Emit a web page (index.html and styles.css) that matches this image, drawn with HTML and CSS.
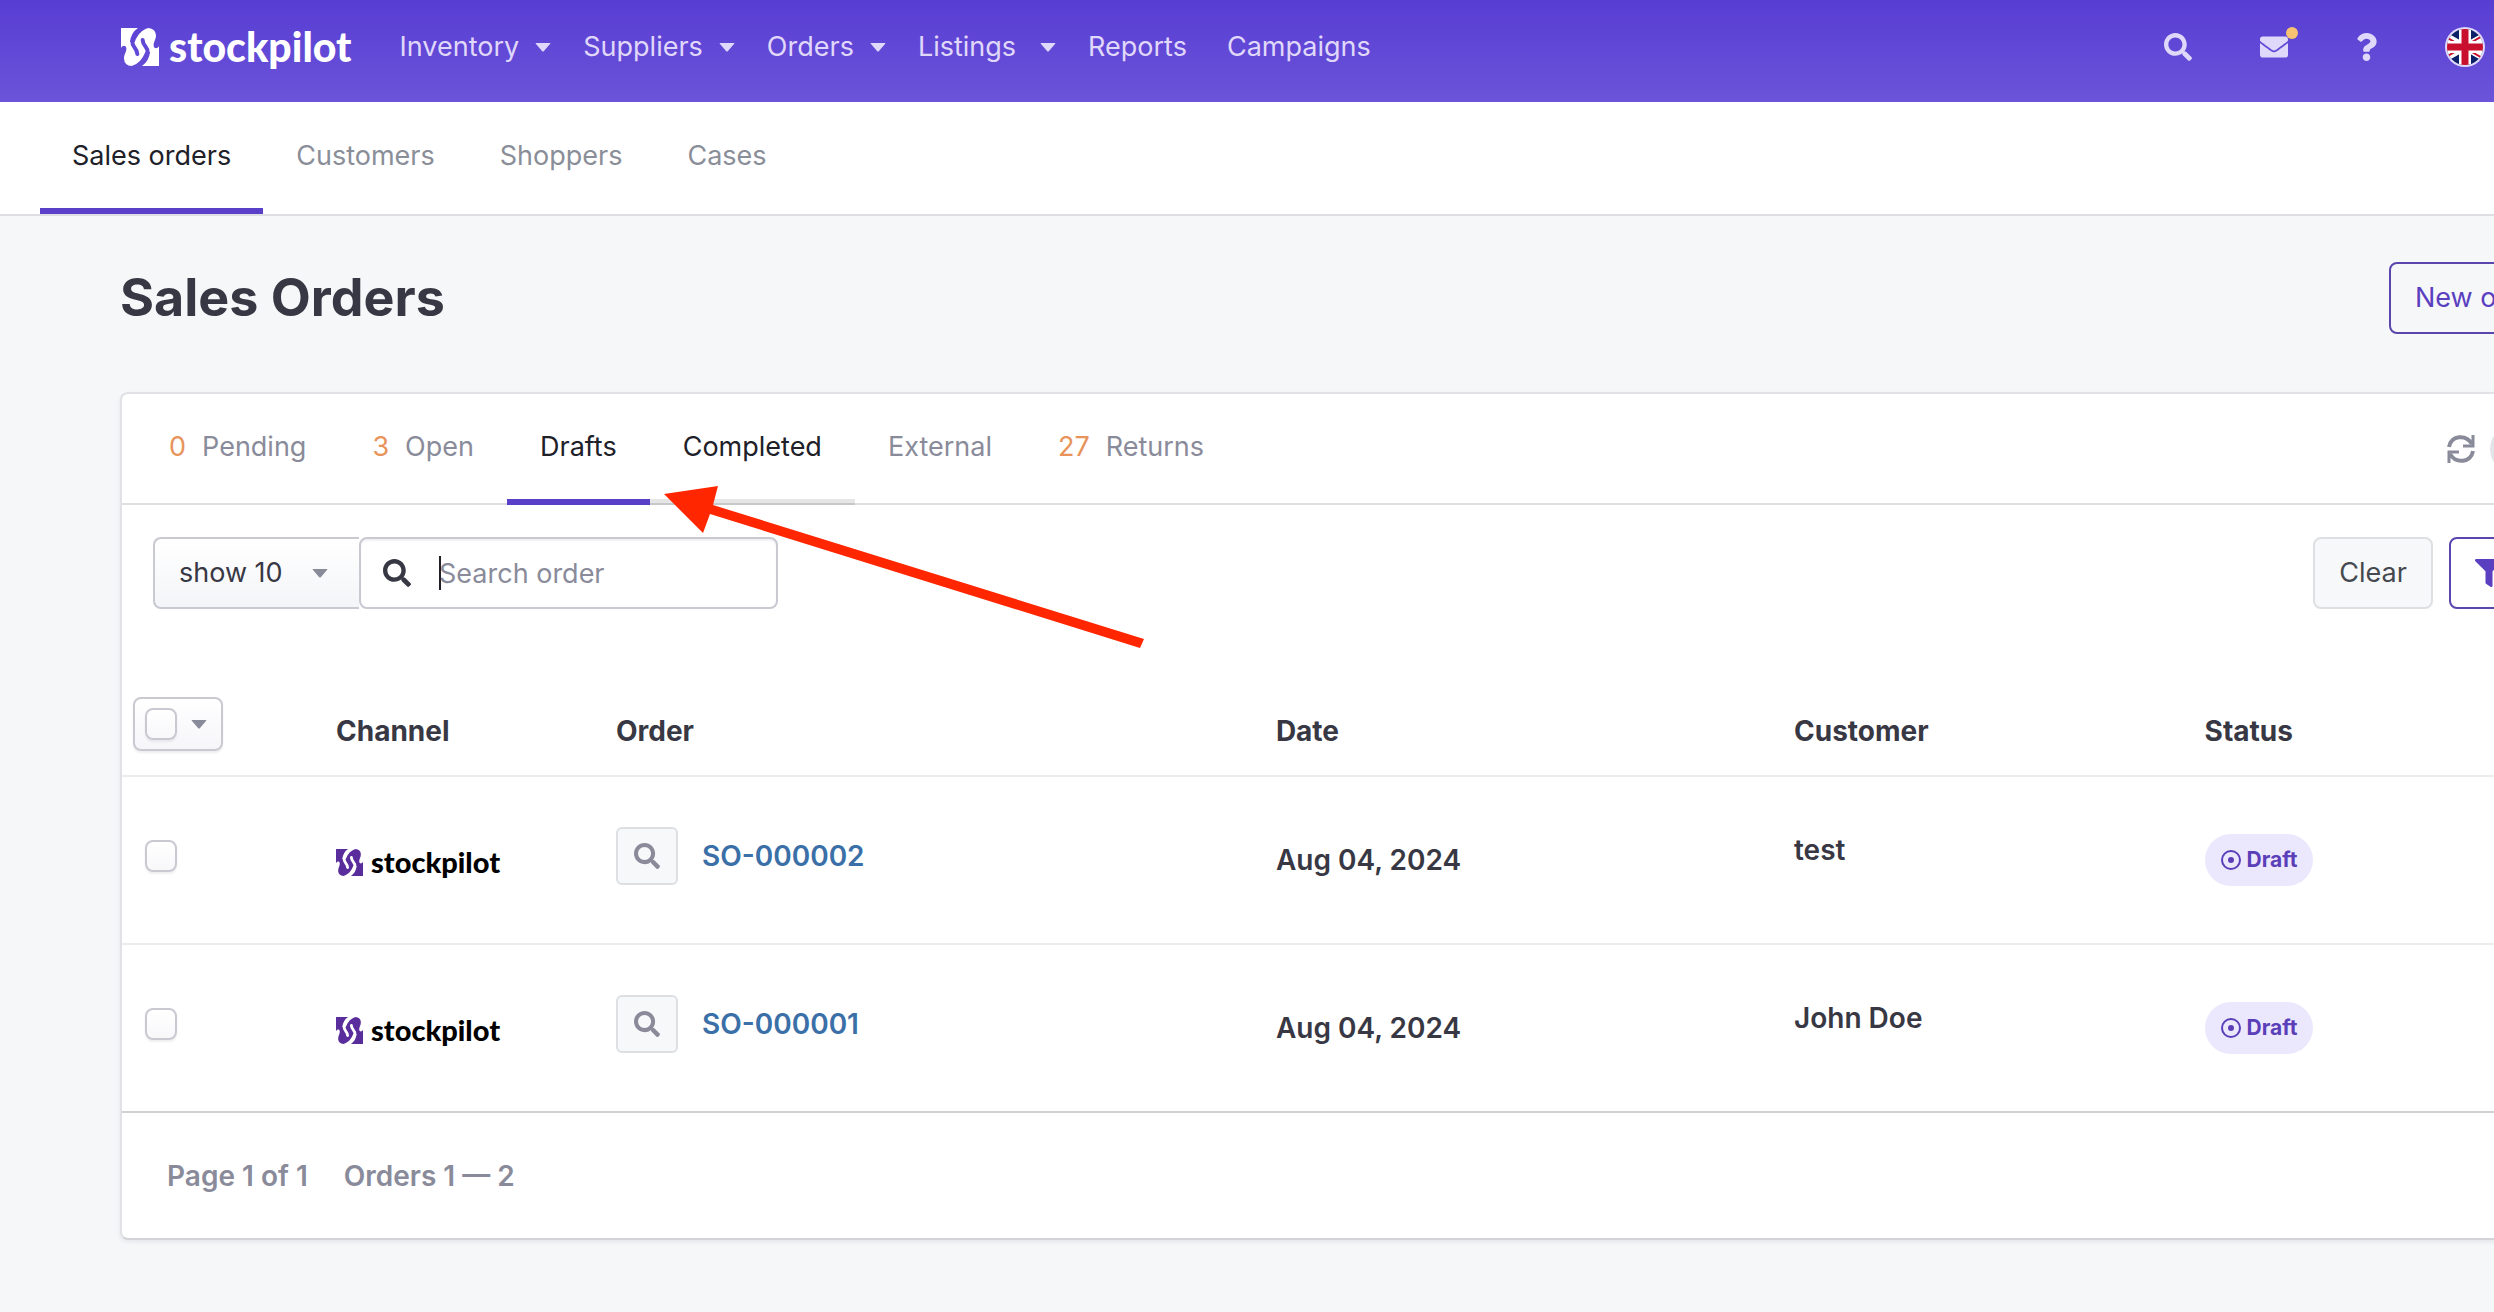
FILE: index.html
```html
<!DOCTYPE html>
<html lang="en">
<head>
    <meta charset="UTF-8">
    <meta name="viewport" content="width=device-width, initial-scale=1.0">
    <title>Sales Orders - stockpilot</title>
    <link rel="stylesheet" href="styles.css">
</head>
<body>
    <!-- shared icons -->
    <svg class="sprite" aria-hidden="true">
        <mask id="mark-cut" maskUnits="userSpaceOnUse" x="0" y="0" width="114" height="114">
            <rect width="114" height="114" fill="#fff"/>
            <g id="mark-strand">
                <path d="M51 0H82C62 6 50 20 41 42L27 42Q30 14 51 0Z" fill="#000"/>
                <path d="M34 40C33 60 48 58 49 78" fill="none" stroke="#000" stroke-width="12" stroke-linecap="round"/>
            </g>
            <use href="#mark-strand" transform="rotate(180 57 57)"/>
        </mask>
        <symbol id="mark" viewBox="0 0 114 114">
            <path mask="url(#mark-cut)" fill="currentColor" d="M0 0H82Q104 2 105 22C105 36 97 42 98 54C100 64 110 62 114 54V114H32Q10 112 9 92C9 78 17 72 16 60C14 50 4 52 0 60Z"/>
        </symbol>
        <symbol id="search" viewBox="0 0 512 512">
            <path fill="currentColor" d="M505 442.7L405.3 343c-4.5-4.5-10.6-7-17-7H372c27.6-35.3 44-79.7 44-128C416 93.1 322.9 0 208 0S0 93.1 0 208s93.1 208 208 208c48.3 0 92.7-16.4 128-44v16.3c0 6.4 2.5 12.5 7 17l99.7 99.7c9.4 9.4 24.6 9.4 33.9 0l28.3-28.3c9.4-9.4 9.4-24.6.1-34zM208 336c-70.7 0-128-57.2-128-128 0-70.7 57.2-128 128-128 70.7 0 128 57.2 128 128 0 70.7-57.2 128-128 128z"/>
        </symbol>
        <symbol id="caret" viewBox="0 0 16 9">
            <path fill="currentColor" d="M1 0H15Q16 0 15 1L9 8Q8 9 7 8L1 1Q0 0 1 0Z"/>
        </symbol>
        <symbol id="dot-circle" viewBox="0 0 20 20">
            <circle cx="10" cy="10" r="9" fill="none" stroke="currentColor" stroke-width="2"/>
            <circle cx="10" cy="10" r="3" fill="currentColor"/>
        </symbol>
    </svg>

    <header class="topbar">
        <a class="brand" href="#"><svg class="brand-mark"><use href="#mark"/></svg>stockpilot</a>
        <nav class="main-nav">
            <a href="#">Inventory <svg class="caret"><use href="#caret"/></svg></a>
            <a href="#">Suppliers <svg class="caret"><use href="#caret"/></svg></a>
            <a href="#">Orders <svg class="caret"><use href="#caret"/></svg></a>
            <a class="wide" href="#">Listings <svg class="caret"><use href="#caret"/></svg></a>
            <a class="plain" href="#">Reports</a>
            <a class="plain" href="#">Campaigns</a>
        </nav>
        <div class="tools">
            <button type="button" aria-label="Search"><svg class="icon"><use href="#search"/></svg></button>
            <button type="button" class="mail" aria-label="Messages">
                <svg class="icon" viewBox="0 0 512 512"><path fill="currentColor" d="M502.3 190.8c3.9-3.1 9.7-.2 9.7 4.7V400c0 26.5-21.5 48-48 48H48c-26.5 0-48-21.5-48-48V195.6c0-5 5.7-7.8 9.7-4.7 22.4 17.4 52.1 39.5 154.1 113.6 21.1 15.4 56.7 47.8 92.2 47.6 35.7.3 72-32.8 92.3-47.6 102-74.1 131.6-96.3 154-113.7zM256 320c23.2.4 56.6-29.2 73.4-41.4 132.7-96.3 142.8-104.7 173.4-128.7 5.8-4.5 9.2-11.5 9.2-18.9v-19c0-26.5-21.5-48-48-48H48c-26.5 0-48 21.5-48 48v19c0 7.4 3.4 14.3 9.2 18.9 30.6 23.9 40.7 32.4 173.4 128.7 16.8 12.2 50.2 41.8 73.4 41.4z"/></svg>
                <span class="mail-dot"></span>
            </button>
            <button type="button" class="help" aria-label="Help">
                <svg class="icon" viewBox="0 0 384 512"><path fill="currentColor" d="M202.021 0C122.202 0 70.503 32.703 29.914 91.026c-7.363 10.58-5.093 25.086 5.178 32.874l43.138 32.709c10.373 7.865 25.132 6.026 33.253-4.148 25.049-31.381 43.63-49.449 82.757-49.449 30.764 0 68.816 19.799 68.816 49.631 0 22.552-18.617 34.134-48.993 51.164-35.423 19.86-82.299 44.576-82.299 106.405V320c0 13.255 10.745 24 24 24h72.471c13.255 0 24-10.745 24-24v-5.773c0-42.86 125.268-44.645 125.268-160.627C377.504 66.256 286.902 0 202.021 0zM192 373.459c-38.196 0-69.271 31.075-69.271 69.271 0 38.195 31.075 69.27 69.271 69.27s69.271-31.075 69.271-69.271-31.075-69.27-69.271-69.27z"/></svg>
            </button>
            <button type="button" class="flag" aria-label="Language">
                <svg viewBox="0 0 40 40">
                    <clipPath id="flag-clip"><circle cx="20" cy="20" r="18"/></clipPath>
                    <circle cx="20" cy="20" r="20" fill="#e0d8fa"/>
                    <g clip-path="url(#flag-clip)">
                        <path fill="#0a2167" d="M0 0H40V40H0Z"/>
                        <path stroke="#fff" stroke-width="7" d="M-8 4L48 36M48 4L-8 36"/>
                        <path stroke="#c8102e" stroke-width="2" d="M-8 5L20 21M48 3L20 19M48 37L20 21M-8 35L20 19"/>
                        <path stroke="#fff" stroke-width="12" d="M20 0V40M0 20H40"/>
                        <path stroke="#c8102e" stroke-width="7" d="M20 0V40M0 20H40"/>
                    </g>
                </svg>
            </button>
        </div>
    </header>

    <nav class="subnav">
        <a class="active" href="#">Sales orders</a>
        <a href="#">Customers</a>
        <a href="#">Shoppers</a>
        <a href="#">Cases</a>
    </nav>

    <main class="page">
        <div class="page-head">
            <h1>Sales Orders</h1>
            <button type="button" class="btn btn-outline">New order</button>
        </div>

        <section class="card">
            <div class="tabs">
                <a href="#"><b>0</b>Pending</a>
                <a href="#"><b>3</b>Open</a>
                <a class="active" href="#">Drafts</a>
                <a class="hover" href="#">Completed</a>
                <a href="#">External</a>
                <a href="#"><b>27</b>Returns</a>
                <div class="tabs-right">
                    <button type="button" class="refresh" aria-label="Refresh">
                        <svg viewBox="0 0 28 28">
                            <g id="half" fill="none" stroke="currentColor" stroke-width="4">
                                <path d="M2 12C4 0 19 -1 25 9"/>
                                <path stroke-width="3" d="M26 0V11H16"/>
                            </g>
                            <use href="#half" transform="rotate(180 14 14)"/>
                        </svg>
                    </button>
                    <span class="avatar"></span>
                </div>
            </div>

            <form class="filters">
                <div class="show">
                    <select aria-label="Rows per page">
                        <option>show 10</option>
                        <option>show 25</option>
                    </select>
                    <svg class="caret"><use href="#caret"/></svg>
                </div>
                <label class="search">
                    <svg class="icon"><use href="#search"/></svg>
                    <span class="cursor"></span>
                    <input type="text" placeholder="Search order" aria-label="Search order">
                </label>
                <button type="button" class="btn btn-clear">Clear</button>
                <button type="button" class="btn btn-outline btn-filter" aria-label="Filter">
                    <svg class="icon" viewBox="0 0 512 512"><path fill="currentColor" d="M487.976 0H24.028C2.71 0-8.047 25.866 7.058 40.971L192 225.941V432c0 7.831 3.821 15.17 10.237 19.662l80 55.98C298.02 518.69 320 507.493 320 487.98V225.941l184.947-184.97C520.021 25.896 509.338 0 487.976 0z"/></svg>
                </button>
            </form>

            <table class="orders">
                <thead>
                    <tr>
                        <th class="col-check">
                            <div class="check-all">
                                <input type="checkbox" aria-label="Select all">
                                <button type="button" aria-label="Selection menu"><svg class="caret"><use href="#caret"/></svg></button>
                            </div>
                        </th>
                        <th class="col-channel">Channel</th>
                        <th class="col-order">Order</th>
                        <th class="col-date">Date</th>
                        <th class="col-customer">Customer</th>
                        <th>Status</th>
                    </tr>
                </thead>
                <tbody>
                    <tr>
                        <td class="check"><input type="checkbox" aria-label="Select SO-000002"></td>
                        <td class="channel"><span class="brand-small"><svg class="brand-mark"><use href="#mark"/></svg>stockpilot</span></td>
                        <td class="order">
                            <div class="order-link">
                                <button type="button" class="view" aria-label="View SO-000002"><svg class="icon"><use href="#search"/></svg></button>
                                <a href="#">SO-000002</a>
                            </div>
                        </td>
                        <td>Aug 04, 2024</td>
                        <td class="customer">test</td>
                        <td><span class="badge"><svg><use href="#dot-circle"/></svg>Draft</span></td>
                    </tr>
                    <tr>
                        <td class="check"><input type="checkbox" aria-label="Select SO-000001"></td>
                        <td class="channel"><span class="brand-small"><svg class="brand-mark"><use href="#mark"/></svg>stockpilot</span></td>
                        <td class="order">
                            <div class="order-link">
                                <button type="button" class="view" aria-label="View SO-000001"><svg class="icon"><use href="#search"/></svg></button>
                                <a href="#">SO-000001</a>
                            </div>
                        </td>
                        <td>Aug 04, 2024</td>
                        <td class="customer">John Doe</td>
                        <td><span class="badge"><svg><use href="#dot-circle"/></svg>Draft</span></td>
                    </tr>
                </tbody>
            </table>

            <div class="card-foot">
                <span>Page 1 of 1</span>
                <span>Orders 1 — 2</span>
            </div>
        </section>
    </main>

    <!-- arrow pointing at the Drafts tab -->
    <svg class="arrow" viewBox="0 0 480 162" aria-hidden="true">
        <path fill="#ff2600" d="M0 8L54 0L49 19L480 153L476 162L46 28L39 47Z"/>
    </svg>
</body>
</html>
```
FILE: styles.css
```css
*{
    box-sizing: border-box;
}
body{
    margin: 0;
    position: relative;
    overflow-x: hidden;
    background: #f6f7f9;
    color: #383844;
    font-family: Inter, "Liberation Sans", sans-serif;
    font-size: 27px;
    line-height: 40px;
}
a{
    color: inherit;
    text-decoration: none;
}
button, input, select{
    margin: 0;
    font: inherit;
    color: inherit;
}
button{
    padding: 0;
    border: 0;
    background: none;
}
svg{
    display: block;
    flex: none;
}
.sprite{
    position: absolute;
    width: 0;
    height: 0;
}
.icon{
    width: 28px;
    height: 28px;
}
.caret{
    width: 16px;
    height: 9px;
}

/* top bar */
.topbar{
    display: flex;
    align-items: center;
    height: 102px;
    padding: 0 9px 8px 121px;
    background: linear-gradient(#583dd3, #6b54d9);
    color: #e0d8fa;
}
.brand{
    display: flex;
    align-items: center;
    gap: 10px;
    color: #fff;
    font-family: Lato, sans-serif;
    font-size: 41px;
    font-weight: 900;
}
.brand-mark{
    width: 38px;
    height: 38px;
}
.main-nav{
    display: flex;
    gap: 32px;
    margin-left: 48px;
}
.main-nav a{
    display: flex;
    align-items: center;
    gap: 16px;
}
.main-nav .wide{
    gap: 24px;
}
.main-nav .plain{
    margin-right: 8px;
}
.tools{
    display: flex;
    align-items: center;
    gap: 68px;
    margin-left: auto;
}
.mail{
    position: relative;
}
.mail-dot{
    position: absolute;
    top: -6px;
    right: -10px;
    width: 12px;
    height: 12px;
    border-radius: 50%;
    background: #f7c272;
}
.help .icon{
    width: 21px;
}
.flag svg{
    width: 40px;
    height: 40px;
}

/* second level navigation */
.subnav{
    display: flex;
    gap: 1px;
    height: 114px;
    padding-left: 40px;
    border-bottom: 2px solid #dddfe3;
    background: #fff;
    color: #8a8e98;
}
.subnav a{
    display: flex;
    align-items: center;
    padding: 2px 32px 0;
    border-bottom: 6px solid transparent;
}
.subnav .active{
    border-color: #5a3fc8;
    color: #202029;
}

/* the card is wider than the window, the rest runs off the right side */
.page{
    margin-right: -194px;
    padding: 46px 120px 72px;
}
.page-head{
    display: flex;
    justify-content: space-between;
    align-items: center;
    margin-bottom: 58px;
}
h1{
    margin: 0;
    font-size: 52px;
    font-weight: 700;
    line-height: 64px;
}
.btn{
    height: 72px;
    padding: 0 24px;
    border: 2px solid #dddfe3;
    border-radius: 8px;
    white-space: nowrap;
}
.btn-outline{
    width: 179px;
    border-color: #5a46ac;
    color: #5a3fc0;
}
.card{
    border: 2px solid #e0e2e6;
    border-bottom-color: #d2d4d8;
    border-radius: 8px;
    background: #fff;
    box-shadow: 0 2px 4px rgba(40, 40, 60, .08);
}
.tabs{
    display: flex;
    height: 111px;
    padding-left: 14px;
    border-bottom: 2px solid #dddfe3;
    color: #8a8b9a;
}
.tabs a{
    display: flex;
    align-items: center;
    gap: 16px;
    margin-bottom: -2px;
    padding: 0 33px;
    border-bottom: 6px solid transparent;
}
.tabs b{
    color: #e8935a;
    font-weight: 400;
}
.tabs .active{
    border-color: #5a3fc8;
    color: #202029;
}
.tabs .hover{
    border-color: rgba(0, 0, 0, .1);
    color: #202029;
}
.tabs-right{
    display: flex;
    align-items: center;
    gap: 15px;
    margin-left: auto;
    padding-right: 28px;
    color: #8a8b9a;
}
.refresh svg{
    width: 28px;
    height: 28px;
}
.avatar{
    width: 48px;
    height: 48px;
    border-radius: 50%;
    background: #e3e4e9;
}

/* filters */
.filters{
    display: flex;
    padding: 32px 29px 40px 31px;
}
.show{
    position: relative;
}
.show select{
    width: 206px;
    height: 72px;
    padding: 0 24px;
    border: 2px solid #c8c9d1;
    border-right: 0;
    border-radius: 8px 0 0 8px;
    background: linear-gradient(#fff, #f4f5f8);
    appearance: none;
}
.show .caret{
    position: absolute;
    top: 32px;
    right: 31px;
    color: #8a8b9a;
}
.search{
    position: relative;
    display: flex;
    align-items: center;
    gap: 28px;
    width: 419px;
    height: 72px;
    margin-right: auto;
    padding-left: 22px;
    border: 2px solid #c8c9d1;
    border-radius: 8px;
    box-shadow: inset 0 2px 2px #f1f1f5;
}
.search input{
    flex: 1;
    min-width: 0;
    padding: 2px 0 0;
    border: 0;
    outline: 0;
    background: none;
}
.search input::placeholder{
    color: #8a8b9a;
    opacity: 1;
}
.cursor{
    position: absolute;
    left: 78px;
    width: 2px;
    height: 34px;
    background: #202029;
}
.btn-clear{
    width: 120px;
    background: #f7f8fa;
    color: #45494f;
}
.btn-filter{
    width: 88px;
    margin-left: 16px;
}

/* orders table */
.orders{
    width: 100%;
    border-collapse: separate;
    border-spacing: 0;
    table-layout: fixed;
    font-size: 28px;
    font-weight: 600;
}
.orders th, .orders td{
    padding: 0 12px;
    border-bottom: 2px solid #ebecee;
    text-align: left;
}
.orders th{
    height: 128px;
    padding-bottom: 24px;
    font-weight: 700;
    vertical-align: bottom;
}
.orders td{
    height: 168px;
}
.orders tr:last-child td{
    border-bottom-color: #d0d1d5;
}
.orders .col-check{
    width: 202px;
    padding-left: 11px;
}
.col-channel{
    width: 280px;
}
.col-order{
    width: 27%;
}
.col-date{
    width: 21.2%;
}
.col-customer{
    width: 16.8%;
}
input[type=checkbox]{
    display: block;
    width: 32px;
    height: 32px;
    border: 2px solid #c8c9d1;
    border-radius: 8px;
    background: linear-gradient(#fff, #f8f8fb);
    box-shadow: 0 2px 2px rgba(40, 40, 60, .08);
    appearance: none;
}
.check-all{
    display: flex;
    align-items: center;
    gap: 14px;
    width: 90px;
    height: 54px;
    padding-left: 10px;
    border: 2px solid #c8c9d1;
    border-radius: 8px;
    background: linear-gradient(#fff, #f6f6fa);
    box-shadow: 0 2px 2px rgba(40, 40, 60, .08);
    color: #8a8b9a;
}
.orders .check{
    padding: 0 0 8px 23px;
}
.orders .channel{
    padding-top: 4px;
}
.orders .order{
    padding-bottom: 8px;
}
.orders .customer{
    padding-bottom: 20px;
}
.brand-small{
    display: flex;
    align-items: center;
    gap: 8px;
    color: #000;
    font-family: Lato, sans-serif;
    font-size: 29px;
    font-weight: 900;
}
.brand-small .brand-mark{
    width: 27px;
    height: 27px;
    color: #5a2d9c;
}
.order-link{
    display: flex;
    align-items: center;
    gap: 24px;
    color: #3b6fa8;
}
.view{
    display: flex;
    align-items: center;
    justify-content: center;
    width: 62px;
    height: 58px;
    border: 2px solid #dddfe3;
    border-radius: 6px;
    background: #f7f8fa;
    color: #8a8b9a;
}
.view .icon{
    width: 26px;
    height: 26px;
}
.badge{
    display: inline-flex;
    align-items: center;
    gap: 6px;
    height: 52px;
    padding: 0 16px;
    border-radius: 26px;
    background: #ebe7fd;
    color: #5a3fb8;
    font-size: 21px;
    font-weight: 700;
    vertical-align: middle;
}
.badge svg{
    width: 20px;
    height: 20px;
}
.card-foot{
    display: flex;
    align-items: center;
    gap: 36px;
    height: 125px;
    padding: 0 45px;
    color: #8a8b9a;
    font-size: 28px;
    font-weight: 600;
}

/* annotation on top of the page */
.arrow{
    position: absolute;
    top: 486px;
    left: 664px;
    width: 480px;
    height: 162px;
    pointer-events: none;
}
```
